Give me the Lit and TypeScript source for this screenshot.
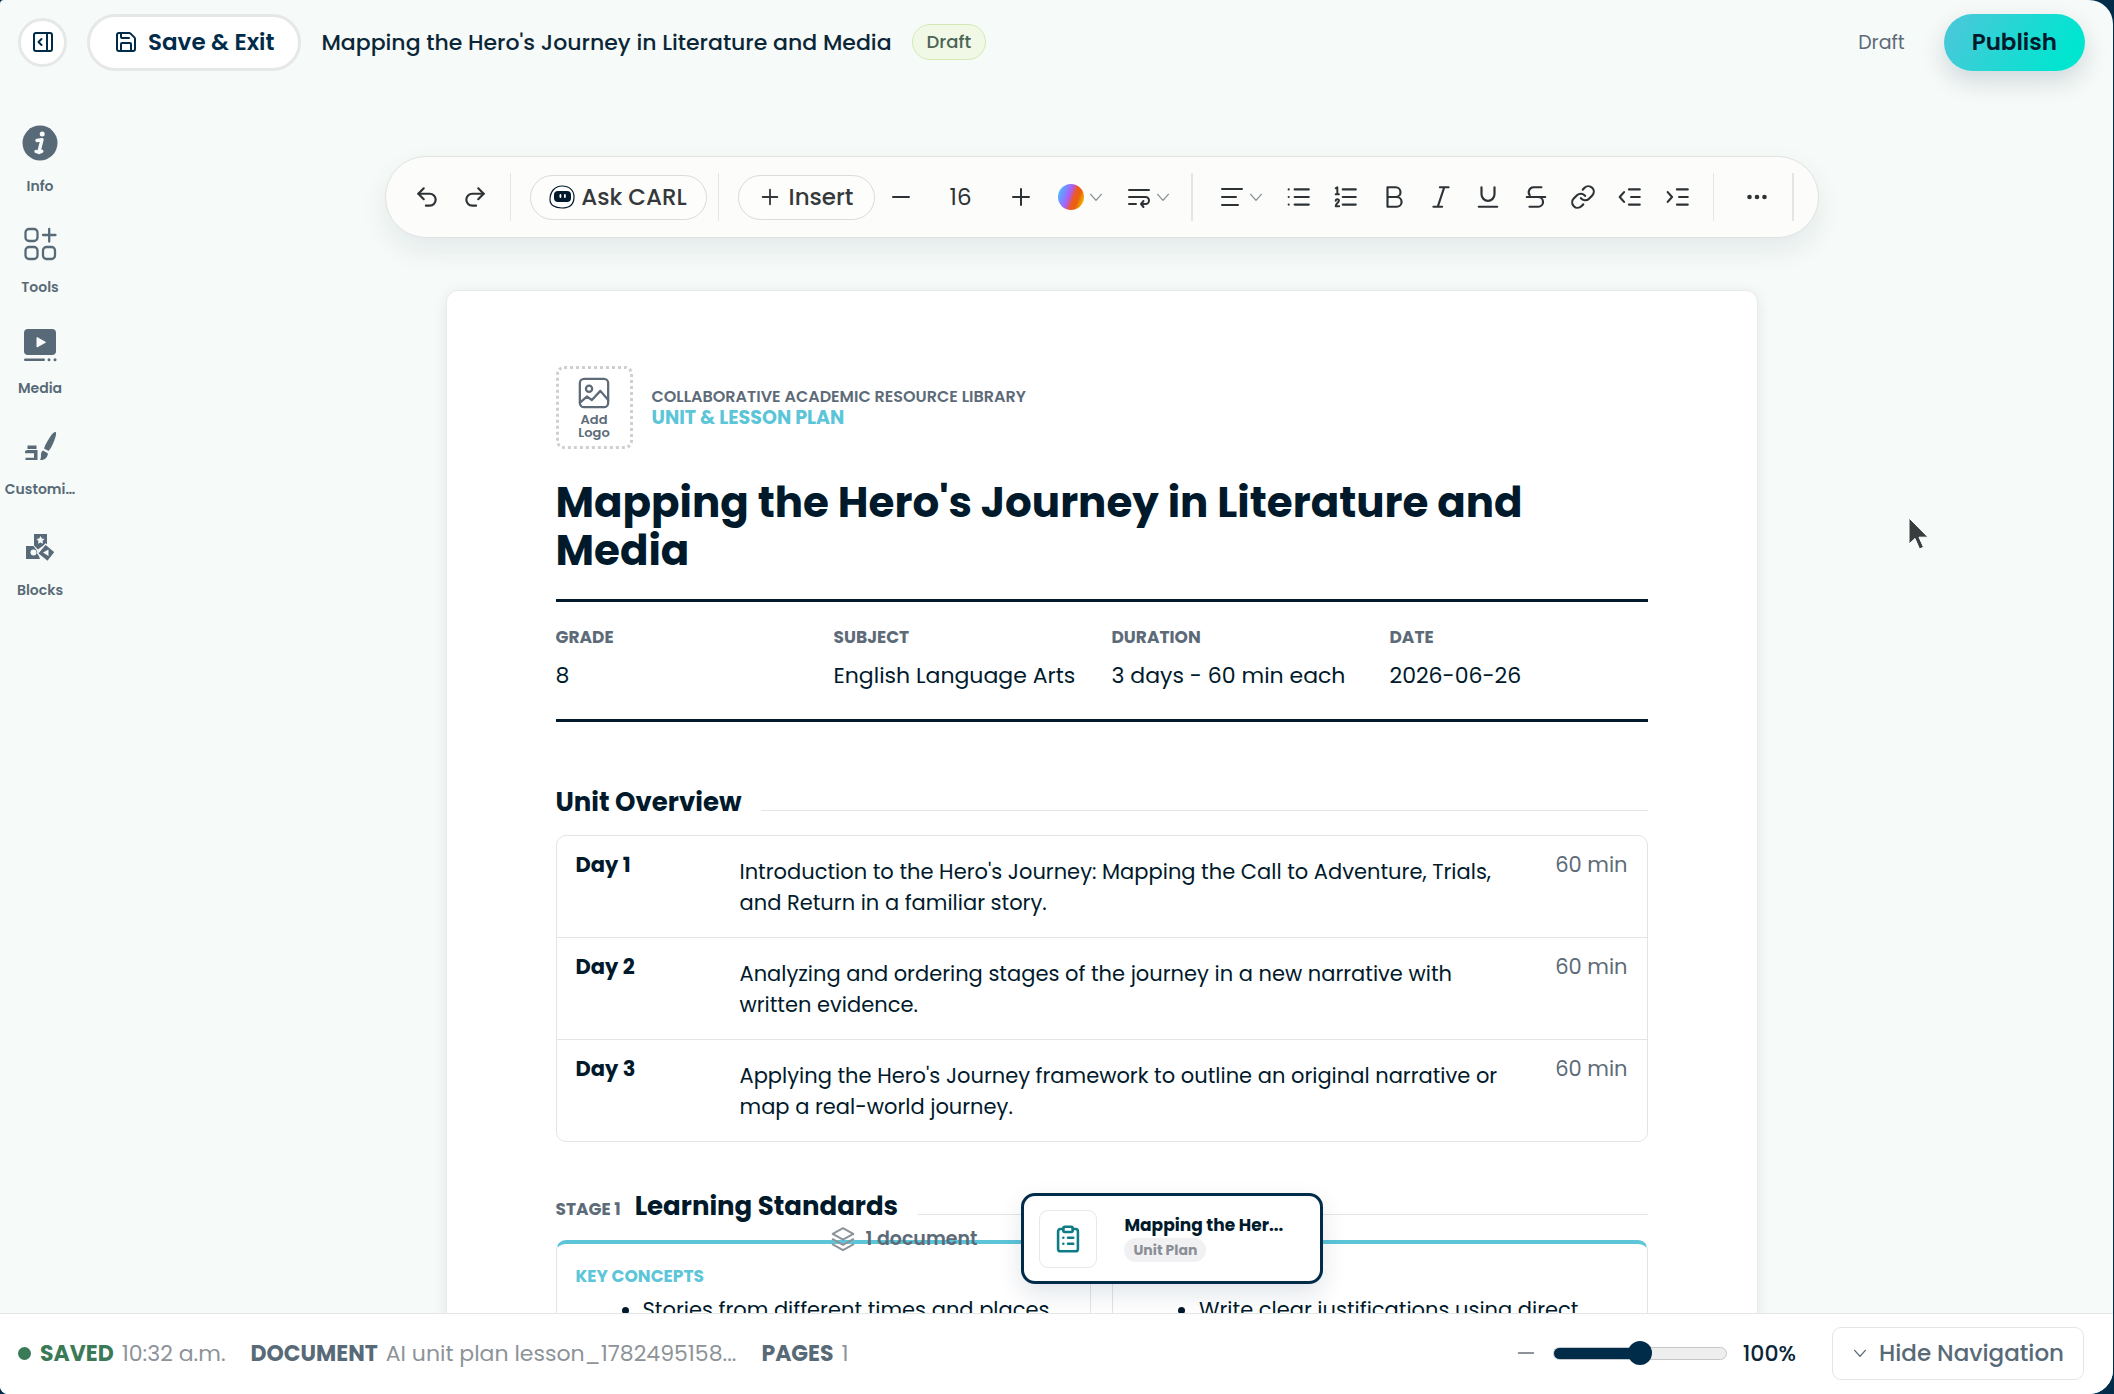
import { LitElement, html, css, svg, type TemplateResult } from "lit";
import { customElement, state } from "lit/decorators.js";

const line = (body: TemplateResult, size = 26, width = 2) => html`
  <svg width=${size} height=${size} viewBox="0 0 24 24" fill="none" stroke="currentColor"
    stroke-width=${width} stroke-linecap="round" stroke-linejoin="round" aria-hidden="true">${body}</svg>`;

const chevron = (size = 16) => line(svg`<path d="M4 8l8 9 8-9"/>`, size, 2);

const icons = {
  panel: svg`<rect x="3" y="3" width="18" height="18" rx="2"/><path d="M16 3v18M10.500 9l-3 3 3 3"/>`,
  save: svg`<path d="M15.200 3a2 2 0 0 1 1.400.6l3.800 3.800a2 2 0 0 1 .6 1.400V19a2 2 0 0 1-2 2H5a2 2 0 0 1-2-2V5a2 2 0 0 1 2-2z"/><path d="M17 21v-7a1 1 0 0 0-1-1H8a1 1 0 0 0-1 1v7M7 3v4a1 1 0 0 0 1 1h7"/>`,
  undo: svg`<path d="M9 14L4 9l5-5"/><path d="M4 9h10.500a5.500 5.500 0 0 1 0 11H11"/>`,
  redo: svg`<path d="M15 14l5-5-5-5"/><path d="M20 9H9.500a5.500 5.500 0 0 0 0 11H13"/>`,
  plus: svg`<path d="M4 12h16M12 4v16"/>`,
  minus: svg`<path d="M4 12h16"/>`,
  wrap: svg`<path d="M2 5h20M2 12h16.500a3.500 3.500 0 0 1 0 7H14M16.500 16L14 19l2.500 3M2 19h7"/>`,
  align: svg`<path d="M2 4h20M2 12h14M2 20h16"/>`,
  bullets: svg`<path d="M8 5h13M8 12h13M8 19h13M2.500 5h.01M2.500 12h.01M2.500 19h.01"/>`,
  numbers: svg`<path d="M9 5h12M9 12h12M9 19h12"/><path stroke-width="1.800" d="M2.500 4L4 3v6.500M2.500 9.500h3M2.500 15.500c0-2 3-2 3 0 0 1.500-3 2.500-3 5h3.200"/>`,
  bold: svg`<path d="M6 12h8.500a4.500 4.500 0 0 1 0 9H6V3h7.500a4.500 4.500 0 0 1 0 9"/>`,
  italic: svg`<path d="M19 3h-8M13 21H5M15 3L9 21"/>`,
  underline: svg`<path d="M6 3v6.500a6 6 0 0 0 12 0V3M3.500 21h17"/>`,
  strike: svg`<path d="M17 3H9.500a4.500 4.500 0 0 0-3.300 7.200M14 12a4.500 4.500 0 0 1 0 9H6M3.500 12h17"/>`,
  link: svg`<path d="M10 13a5 5 0 0 0 7.540.54l3-3a5 5 0 0 0-7.070-7.070l-1.720 1.710"/><path d="M14 11a5 5 0 0 0-7.540-.54l-3 3a5 5 0 0 0 7.070 7.070l1.710-1.710"/>`,
  outdent: svg`<path d="M11 5h10M13 12h8M11 19h10M6.500 7.500L2.500 12l4 4.500"/>`,
  indent: svg`<path d="M11 5h10M13 12h8M11 19h10M2.500 7.500l4 4.500-4 4.500"/>`,
  image: svg`<rect x="2" y="2" width="20" height="20" rx="3"/><circle cx="8.500" cy="9" r="2.200"/><path d="M2.500 18.500l4.500-4 3.500 2.500 6-6.500 5.500 6.500"/>`,
  layers: svg`<path d="M12 2l9.500 5.300L12 12.600 2.500 7.300z"/><path d="M2.500 12.200l9.500 5.300 9.500-5.300M2.500 17l9.500 5.300 9.500-5.300"/>`,
  clipboard: svg`<rect x="8" y="1.500" width="8" height="4.500" rx="1.200"/><path d="M16 3.500h2.500a2 2 0 0 1 2 2v15a2 2 0 0 1-2 2h-13a2 2 0 0 1-2-2v-15a2 2 0 0 1 2-2H8M12 11h4.500M12 16h4.500M8 11h.01M8 16h.01"/>`,
};

const solid = (body: TemplateResult) =>
  html`<svg width="36" height="36" viewBox="0 0 36 36" fill="currentColor" aria-hidden="true">${body}</svg>`;

const navItems = [
  {
    label: "Info",
    icon: solid(svg`<circle cx="18" cy="18" r="17.500"/><circle cx="20.200" cy="9" r="2.500" fill="#f6faf8"/><path d="M15 15.500l5-.8-2.800 11c-.3 1.600.8 1.600 2.600.6M14 26.500l3 1" fill="none" stroke="#f6faf8" stroke-width="3.400" stroke-linecap="round" stroke-linejoin="round"/>`),
  },
  {
    label: "Tools",
    icon: solid(svg`<g fill="none" stroke="currentColor" stroke-width="2.300" stroke-linecap="round"><rect x="3.500" y="3" width="12" height="12" rx="3.500"/><rect x="3.500" y="21" width="12" height="12" rx="3.500"/><rect x="21" y="21" width="12" height="12" rx="3.500"/><path d="M21 9h12.500M27.200 3v12.500"/></g>`),
  },
  {
    label: "Media",
    icon: solid(svg`<rect x="2" y="2" width="32" height="26" rx="4"/><path d="M15 10.500v9.500l8.500-4.700z" fill="#f6faf8" stroke="#f6faf8" stroke-linejoin="round"/><rect x="2" y="31.500" width="21" height="2.500" rx="1.200"/><circle cx="27" cy="32.700" r="1.500"/><circle cx="33" cy="32.700" r="1.500"/>`),
  },
  {
    label: "Customi…",
    icon: solid(svg`<path d="M33.500 4c1.200.6.600 3.800-1.200 8.500-1.600 4.200-3.500 8-5.800 10.500L22 20.500C23.500 16 26.500 11 29 7.500 31 4.800 32.500 3.500 33.500 4zM21 22.500l4.800 2.700c.2 4-3.300 7.300-7.800 6.800 1.200-1.800.8-3.400 1-5.500.1-1.900.8-3.200 2-4z"/><path d="M5.500 17.500h9v3.500h-9zM6 22h9.500v10H3.500v-2.300h8.500v-4.400H3V24c0-1.200 1-2 3-2z"/>`),
  },
  {
    label: "Blocks",
    icon: solid(svg`<g transform="translate(0 1)"><path d="M12 4h13v10l-5 2.500-4 3-4-4z"/><path d="M4 16h7.500l3 4 3.500 9H4z"/><path d="M23.500 14l9.500 8-7.500 9.500-10-8z" stroke="#f6faf8" stroke-width="1.200"/><path d="M18.500 6l1.300 2.500 2.700.4-2 2 .5 2.800-2.500-1.300-2.500 1.300.5-2.800-2-2 2.700-.4z" fill="#f6faf8"/><circle cx="11.500" cy="22.500" r="3" fill="#f6faf8"/><path d="M21 22.500l5.500-3v6.500z" fill="#f6faf8"/></g>`),
  },
];

const formatTools: [string, TemplateResult][] = [
  ["Bulleted list", icons.bullets],
  ["Numbered list", icons.numbers],
  ["Bold", icons.bold],
  ["Italic", icons.italic],
  ["Underline", icons.underline],
  ["Strikethrough", icons.strike],
  ["Link", icons.link],
  ["Decrease indent", icons.outdent],
  ["Increase indent", icons.indent],
];

const facts = [
  ["Grade", "8"],
  ["Subject", "English Language Arts"],
  ["Duration", "3 days - 60 min each"],
  ["Date", "2026-06-26"],
];

const days = [
  ["Day 1", "Introduction to the Hero's Journey: Mapping the Call to Adventure, Trials, and Return in a familiar story.", "60 min"],
  ["Day 2", "Analyzing and ordering stages of the journey in a new narrative with written evidence.", "60 min"],
  ["Day 3", "Applying the Hero's Journey framework to outline an original narrative or map a real-world journey.", "60 min"],
];

@customElement("app-root")
export class AppRoot extends LitElement {
  @state() private zoom = 100;

  static styles = css`
    :host {
      display: block;
      height: 100vh;
      background: #002b49;
      font-family: Poppins, Inter, "Open Sans", sans-serif;
      font-size: 21px;
      color: #001a2c;
    }
    * { box-sizing: border-box; }
    h1, h2, h3, p, dl, dd, ul { margin: 0; padding: 0; }
    button, input { font: inherit; color: inherit; margin: 0; }
    button {
      display: inline-flex;
      align-items: center;
      justify-content: center;
      padding: 0;
      border: 0;
      background: none;
      cursor: pointer;
      white-space: nowrap;
    }
    svg { display: block; flex: none; }

    .window {
      height: 100%;
      margin-right: 1px;
      display: flex;
      flex-direction: column;
      overflow: hidden;
      border-radius: 4px 24px 24px 8px;
      background: #f6faf8;
    }

    .header {
      display: flex;
      align-items: center;
      height: 84px;
      flex: none;
      padding: 0 28px 0 18px;
    }
    .round {
      width: 49px;
      height: 49px;
      border: 3px solid #e6e8e7;
      border-radius: 50%;
      background: #fff;
      color: #002b49;
    }
    .save {
      height: 57px;
      margin: 0 20px;
      padding: 0 24px;
      gap: 10px;
      border: 3px solid #e6e8e7;
      border-radius: 29px;
      background: #fff;
      color: #002b49;
      font-size: 23px;
      font-weight: 600;
    }
    .title { font-size: 22px; font-weight: 500; color: #0b2637; }
    .badge {
      margin-left: 20px;
      padding: 4px 14px;
      border: 1px solid #d3e8b4;
      border-radius: 18px;
      background: #f1f9e6;
      color: #4c6455;
      font-size: 18px;
      line-height: 26px;
      font-weight: 500;
    }
    .status { margin-left: auto; margin-right: 39px; font-size: 19px; color: #5d6b78; }
    .publish {
      height: 57px;
      padding: 0 28px;
      border-radius: 29px;
      background: linear-gradient(120deg, #4fc6da, #00e5d0 85%);
      box-shadow: 0 10px 24px rgba(0, 43, 73, 0.16);
      color: #001a2c;
      font-size: 23px;
      font-weight: 600;
    }

    .body {
      position: relative;
      flex: 1;
      min-height: 0;
      display: grid;
      grid-template-columns: 80px minmax(0, 1fr);
      column-gap: 10px;
      overflow: hidden;
    }
    .nav {
      display: flex;
      flex-direction: column;
      gap: 30px;
      padding-top: 41px;
    }
    .nav button {
      flex-direction: column;
      gap: 15px;
      color: #586a77;
      font-size: 14px;
      line-height: 20px;
      font-weight: 600;
    }

    .workspace {
      display: flex;
      flex-direction: column;
      align-items: center;
      padding-top: 72px;
      min-width: 0;
    }
    .toolbar {
      display: flex;
      align-items: center;
      flex: none;
      width: 100%;
      max-width: 1434px;
      height: 82px;
      padding: 0 24px 0 17px;
      border: 1px solid #dfe3e0;
      border-radius: 41px;
      background: #fcfdfa;
      box-shadow: 0 12px 28px rgba(0, 43, 73, 0.08);
      color: #2d3236;
      font-size: 23px;
      font-weight: 500;
    }
    .toolbar > * { flex: none; }
    .tool { width: 48px; height: 48px; }
    .step { width: 52px; height: 48px; }
    .menu { width: 68px; height: 48px; gap: 4px; }
    .menu svg:last-child { color: #8b9196; }
    .pill {
      height: 45px;
      border: 1px solid #d9dcda;
      border-radius: 23px;
      background: #fdfefb;
      color: #35393c;
    }
    .ask { width: 177px; gap: 6px; }
    .insert { width: 137px; gap: 8px; }
    .size {
      width: 68px;
      height: 40px;
      padding: 0;
      border: 0;
      background: none;
      text-align: center;
      font-weight: 400;
    }
    .swatch {
      width: 26px;
      height: 26px;
      border-radius: 50%;
      background: linear-gradient(110deg, #50b4ff 12%, #9b6bff 38%, #b65bd8 46%, #ee5a24 58%, #e8610c 72%, #f7c400 92%);
    }
    .sep { width: 1px; height: 48px; margin: 0 19px 0 11px; background: #e3e5e6; }
    .sep.thick { width: 2px; margin: 0 15px 0 8px; }
    .sep.last { width: 2px; margin-right: 0; }
    .toolbar .formats { display: flex; flex: 1; min-width: 0; }
    .formats .tool { flex: 1 1 0; min-width: 0; }

    .page {
      flex: none;
      width: 100%;
      max-width: 1312px;
      margin-top: 52px;
      padding: 75px 109px;
      border: 1px solid #e7ebe9;
      border-radius: 12px;
      background: #fff;
      box-shadow: 0 2px 14px rgba(0, 43, 73, 0.08);
    }
    .brand { display: flex; align-items: center; gap: 19px; color: #5d6b78; font-size: 16px; line-height: 20px; font-weight: 600; }
    .brand strong { display: block; color: #5cc5d8; font-size: 19px; line-height: 22px; font-weight: 700; }
    .logo {
      flex-direction: column;
      width: 77px;
      height: 83px;
      gap: 3px;
      border: 3px dotted #cfcfd1;
      border-radius: 8px;
      font-size: 13px;
      line-height: 13px;
      font-weight: 600;
      white-space: normal;
    }
    .logo span { width: 40px; }
    h1 { margin-top: 30px; font-size: 42px; line-height: 48px; font-weight: 700; }
    .facts {
      display: grid;
      grid-template-columns: repeat(4, minmax(0, 1fr));
      gap: 20px;
      margin-top: 24px;
      padding: 22px 0 27px;
      border: solid #001a2c;
      border-width: 3px 0;
    }
    dt { color: #5d6b78; font-size: 17px; line-height: 26px; font-weight: 700; text-transform: uppercase; }
    dd { margin-top: 10px; font-size: 22px; line-height: 32px; white-space: nowrap; }

    .section { display: flex; align-items: baseline; }
    .section h2 { font-size: 26px; line-height: 36px; font-weight: 700; }
    .section .rule { flex: 1; align-self: center; margin: 16px 0 0 20px; height: 1px; background: #e2e4e5; }
    .stage { margin-right: 14px; color: #5d6b78; font-size: 17px; font-weight: 700; }
    .overview { margin-top: 62px; }
    .standards { margin-top: 46px; }

    table {
      width: 100%;
      margin-top: 15px;
      border: 1px solid #e2e4e5;
      border-radius: 10px;
      border-spacing: 0;
    }
    th, td { padding: 14px 19px; vertical-align: top; text-align: left; line-height: 30px; }
    tr + tr > * { border-top: 1px solid #e2e4e5; }
    th { width: 164px; font-weight: 700; }
    td.topic { padding: 20px 19px 19px; line-height: 31px; }
    td.time { width: 114px; color: #5d6b78; text-align: right; white-space: nowrap; }

    .cards { display: grid; grid-template-columns: repeat(2, minmax(0, 1fr)); gap: 21px; margin-top: 16px; }
    .card {
      padding: 19px;
      border: 1px solid #e2e4e5;
      border-top: 4px solid #5cc5d8;
      border-radius: 10px;
    }
    .card h3 { min-height: 26px; color: #5cc5d8; font-size: 17px; line-height: 26px; font-weight: 700; }
    .card ul { margin-top: 5px; padding-left: 67px; line-height: 31px; }

    .tray {
      position: absolute;
      left: calc(50% - 227px);
      bottom: 29px;
      display: flex;
      align-items: center;
      gap: 44px;
    }
    .count { display: flex; align-items: center; gap: 10px; color: #5d6b78; font-size: 19px; font-weight: 600; }
    .count svg { color: #8b9399; }
    .doc {
      width: 302px;
      height: 91px;
      padding: 0 15px;
      gap: 27px;
      justify-content: flex-start;
      border: 3px solid #002b49;
      border-radius: 14px;
      background: #fff;
      box-shadow: 0 10px 24px rgba(0, 43, 73, 0.12);
      text-align: left;
    }
    .thumb {
      display: flex;
      align-items: center;
      justify-content: center;
      width: 58px;
      height: 58px;
      border: 1px solid #e6e8e9;
      border-radius: 9px;
      color: #0e7c86;
    }
    .about { display: flex; flex-direction: column; align-items: flex-start; padding-bottom: 4px; }
    .docname { font-size: 17px; line-height: 26px; font-weight: 700; }
    .kind {
      padding: 0 9px;
      border-radius: 12px;
      background: #f1f1f3;
      color: #8a8f96;
      font-size: 14px;
      line-height: 24px;
      font-weight: 700;
    }
    .cursor { position: absolute; left: 1908px; top: 433px; }

    .footer {
      display: flex;
      align-items: center;
      flex: none;
      height: 81px;
      padding: 0 29px 2px 18px;
      border-top: 1px solid #e3e6e5;
      background: #fff;
      color: #8d9398;
      font-size: 22px;
      white-space: nowrap;
    }
    .footer b { color: #586a77; font-weight: 700; margin-right: 8px; }
    .footer .group { margin-right: 25px; }
    .footer .saved { color: #3b7a57; }
    .dot { width: 13px; height: 13px; margin-right: 9px; border-radius: 50%; background: #3b7a57; }
    .zoom { display: flex; align-items: center; margin-left: auto; gap: 16px; }
    .zoom output { font-weight: 500; color: #0b2637; }
    .zoom input {
      appearance: none;
      width: 174px;
      height: 24px;
      background: none;
    }
    .zoom input::-webkit-slider-runnable-track {
      height: 13px;
      border: 1px solid #c3c7ca;
      border-radius: 7px;
      background: linear-gradient(90deg, #002b49 50%, #eeeeee 50%);
    }
    .zoom input::-webkit-slider-thumb {
      appearance: none;
      width: 24px;
      height: 24px;
      margin-top: -7px;
      border-radius: 50%;
      background: #002b49;
    }
    .hide {
      width: 252px;
      height: 53px;
      margin-left: 36px;
      gap: 11px;
      border: 1px solid #e3e6e8;
      border-radius: 9px;
      color: #586a77;
      font-size: 23px;
      font-weight: 500;
    }
  `;

  render() {
    return html`
      <div class="window">
        <header class="header">
          <button class="round" aria-label="Toggle panel">${line(icons.panel, 24)}</button>
          <button class="save">${line(icons.save, 24)}Save &amp; Exit</button>
          <span class="title">Mapping the Hero's Journey in Literature and Media</span>
          <span class="badge">Draft</span>
          <span class="status">Draft</span>
          <button class="publish">Publish</button>
        </header>

        <div class="body">
          <nav class="nav">
            ${navItems.map((item) => html`<button>${item.icon}<span>${item.label}</span></button>`)}
          </nav>

          <main class="workspace">
            ${this.renderToolbar()}
            <article class="page">
              <div class="brand">
                <button class="logo">${line(icons.image, 34, 1.6)}<span>Add Logo</span></button>
                <p>COLLABORATIVE ACADEMIC RESOURCE LIBRARY<strong>UNIT &amp; LESSON PLAN</strong></p>
              </div>
              <h1>Mapping the Hero's Journey in Literature and Media</h1>
              <dl class="facts">
                ${facts.map(([name, value]) => html`<div><dt>${name}</dt><dd>${value}</dd></div>`)}
              </dl>

              <div class="section overview"><h2>Unit Overview</h2><span class="rule"></span></div>
              <table>
                <tbody>
                  ${days.map(([day, topic, time]) => html`
                    <tr><th scope="row">${day}</th><td class="topic">${topic}</td><td class="time">${time}</td></tr>`)}
                </tbody>
              </table>

              <div class="section standards">
                <span class="stage">STAGE 1</span><h2>Learning Standards</h2><span class="rule"></span>
              </div>
              <div class="cards">
                <section class="card">
                  <h3>KEY CONCEPTS</h3>
                  <ul><li>Stories from different times and places</li></ul>
                </section>
                <section class="card">
                  <h3></h3>
                  <ul><li>Write clear justifications using direct</li></ul>
                </section>
              </div>
            </article>
          </main>

          <div class="tray">
            <span class="count">${line(icons.layers, 26, 1.8)}1 document</span>
            <button class="doc">
              <span class="thumb">${line(icons.clipboard, 28, 2.2)}</span>
              <span class="about"><span class="docname">Mapping the Her...</span><span class="kind">Unit Plan</span></span>
            </button>
          </div>
          <svg class="cursor" width="22" height="34" viewBox="0 0 22 34" aria-hidden="true">
            <path d="M1 1v26l6-5.500 4.500 10.500 4-1.800-4.500-10H20z" fill="#3a3d3f" stroke="#fff" stroke-width="1"/>
          </svg>
        </div>

        <footer class="footer">
          <span class="dot"></span>
          <span class="group"><b class="saved">SAVED</b>10:32 a.m.</span>
          <span class="group"><b>DOCUMENT</b>AI unit plan lesson_1782495158...</span>
          <span class="group"><b>PAGES</b>1</span>
          <div class="zoom">
            <button aria-label="Zoom out">${line(icons.minus, 22, 2)}</button>
            <input type="range" min="0" max="200" aria-label="Zoom" .value=${String(this.zoom)}
              @input=${(e: Event) => (this.zoom = Number((e.target as HTMLInputElement).value))} />
            <output>${this.zoom}%</output>
          </div>
          <button class="hide">${chevron()}Hide Navigation</button>
        </footer>
      </div>
    `;
  }

  private renderToolbar() {
    return html`
      <div class="toolbar" role="toolbar" aria-label="Formatting">
        <button class="tool" aria-label="Undo">${line(icons.undo, 26)}</button>
        <button class="tool" aria-label="Redo">${line(icons.redo, 26)}</button>
        <span class="sep"></span>
        <button class="pill ask">
          <svg width="26" height="24" viewBox="0 0 26 24" aria-hidden="true">
            <path d="M13 1c7 0 12 4 12 11s-4 11-12 11C5.500 23 1 20 1 14.500 1 6.500 6 1 13 1z" fill="#fff" stroke="#001a2c" stroke-width="1.200"/>
            <rect x="5" y="6" width="17" height="11" rx="4" fill="#001a2c"/>
            <rect x="10.500" y="9" width="1.800" height="4" rx=".9" fill="#fff"/>
            <rect x="15" y="9" width="1.800" height="4" rx=".9" fill="#fff"/>
          </svg>Ask CARL
        </button>
        <span class="sep"></span>
        <button class="pill insert">${line(icons.plus, 22)}Insert</button>
        <button class="step" aria-label="Smaller text">${line(icons.minus, 24)}</button>
        <input class="size" type="text" aria-label="Text size" value="16" />
        <button class="step" aria-label="Larger text">${line(icons.plus, 24)}</button>
        <button class="menu" aria-label="Colour"><span class="swatch"></span>${chevron()}</button>
        <button class="menu" aria-label="Line wrapping">${line(icons.wrap, 24)}${chevron()}</button>
        <span class="sep thick"></span>
        <button class="menu" aria-label="Alignment">${line(icons.align, 24)}${chevron()}</button>
        <div class="formats">
          ${formatTools.map(([name, icon]) => html`<button class="tool" aria-label=${name}>${line(icon, 26)}</button>`)}
        </div>
        <span class="sep"></span>
        <button class="tool" aria-label="More">
          <svg width="22" height="22" viewBox="0 0 22 22" fill="currentColor" aria-hidden="true">
            <circle cx="3.500" cy="11" r="2.300"/><circle cx="11" cy="11" r="2.300"/><circle cx="18.500" cy="11" r="2.300"/>
          </svg>
        </button>
        <span class="sep last"></span>
      </div>
    `;
  }
}
